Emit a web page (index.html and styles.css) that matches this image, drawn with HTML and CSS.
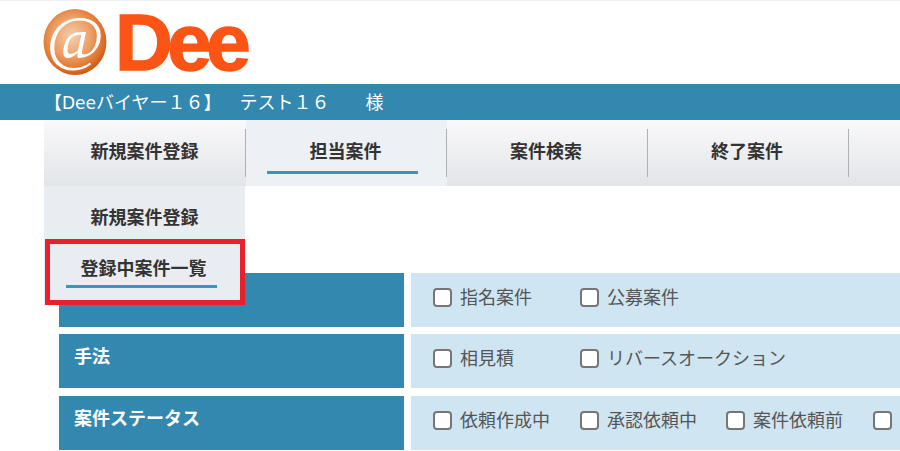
FILE: index.html
```html
<!DOCTYPE html>
<html lang="ja">
<head>
    <meta charset="UTF-8">
    <meta name="viewport" content="width=device-width, initial-scale=1.0">
    <title>担当案件</title>
    <link rel="stylesheet" href="styles.css">
</head>
<body>
    <header class="logo-area">
        <div class="logo">
            <svg class="logo-mark" width="64" height="82" viewBox="0 0 64 82" aria-hidden="true">
                <defs>
                    <radialGradient id="ball" cx="0.45" cy="0.42" r="0.6">
                        <stop offset="0" stop-color="#f6cfae"/>
                        <stop offset="0.55" stop-color="#ec9a5e"/>
                        <stop offset="0.85" stop-color="#dd6f28"/>
                        <stop offset="1" stop-color="#c9530f"/>
                    </radialGradient>
                </defs>
                <ellipse cx="32" cy="40" rx="31.5" ry="33" fill="url(#ball)"/>
                <text class="logo-at" x="32" y="56">@</text>
            </svg>
            <span class="logo-name">Dee</span>
        </div>
    </header>

    <div class="user-bar">【<span class="latin">Dee</span>バイヤー１６】<span class="user-name">テスト１６　　様</span></div>

    <nav class="main-nav">
        <div class="nav-item">
            <a>新規案件登録</a>
            <div class="sub-menu">
                <a class="sub-item">新規案件登録</a>
                <a class="sub-item sub-current"><span>登録中案件一覧</span></a>
            </div>
        </div>
        <div class="nav-item nav-current"><a><span>担当案件</span></a></div>
        <div class="nav-item nav-plain"><a>案件検索</a></div>
        <div class="nav-item nav-plain"><a>終了案件</a></div>
        <div class="nav-rest"></div>
    </nav>

    <section class="search-form">
        <div class="form-row">
            <div class="row-title"></div>
            <div class="row-body">
                <label class="check check-1"><i></i>指名案件</label>
                <label class="check check-2"><i></i>公募案件</label>
            </div>
        </div>
        <div class="form-row">
            <div class="row-title">手法</div>
            <div class="row-body">
                <label class="check check-1"><i></i>相見積</label>
                <label class="check check-2"><i></i>リバースオークション</label>
            </div>
        </div>
        <div class="form-row">
            <div class="row-title">案件ステータス</div>
            <div class="row-body">
                <label class="check check-1"><i></i>依頼作成中</label>
                <label class="check check-2"><i></i>承認依頼中</label>
                <label class="check check-3"><i></i>案件依頼前</label>
                <label class="check"><i></i></label>
            </div>
        </div>
    </section>
</body>
</html>
```

FILE: styles.css
```css
html, body {
    height: 100%;
    overflow: hidden;
}
body {
    margin: 0;
    background: #fff;
    color: #333;
    font-family: "Noto Sans CJK JP", "Noto Sans", sans-serif;
    font-size: 18px;
}
.logo-area {
    height: 84px;
    padding-left: 43px;
    border-top: 1px solid #eef0f2;
    box-sizing: border-box;
}
.logo {
    display: flex;
    align-items: flex-start;
    height: 83px;
}
.logo-mark {
    flex: none;
    margin-top: 1px;
}
.logo-at {
    fill: #fff;
    font-family: "Liberation Serif", serif;
    font-style: italic;
    font-size: 62px;
    text-anchor: middle;
}
.logo-name {
    margin: -1px 0 0 8px;
    color: #fb5414;
    font-family: "Liberation Sans", sans-serif;
    font-weight: bold;
    font-size: 80px;
    line-height: 86px;
    letter-spacing: -5.5px;
    -webkit-text-stroke: 1.5px #fb5414;
}
.user-bar {
    height: 36px;
    padding-left: 44px;
    background: #3288af;
    color: #fff;
    line-height: 34px;
    white-space: nowrap;
}
.latin {
    font-family: "DejaVu Sans", sans-serif;
    font-size: 17px;
}
.user-name {
    margin-left: 18px;
}
.main-nav {
    display: flex;
    height: 66px;
    margin-left: 44px;
    background: linear-gradient(#f9f9fa, #e2e4e8);
    position: relative;
    z-index: 2;
}
.nav-item {
    flex: none;
    width: 201px;
    height: 66px;
    position: relative;
    font-weight: bold;
    text-align: center;
}
.nav-item:first-child {
    width: 202px;
}
.nav-item > a {
    display: block;
    height: 48px;
    margin-top: 9px;
    border-right: 1px solid #aeb0b2;
    line-height: 43px;
}
.nav-plain > a {
    padding-right: 2px;
    box-sizing: border-box;
}
.nav-current {
    background: #edf1f6;
}
.nav-current > a span {
    display: block;
    width: 151px;
    height: 42px;
    margin-left: 21px;
    border-bottom: 3px solid #3f93b7;
    text-indent: 6px;
}
.nav-rest {
    flex: 1;
}
.sub-menu {
    position: absolute;
    top: 66px;
    left: 0;
    width: 201px;
    background: #e9edf1;
}
.sub-item {
    display: block;
    height: 53px;
    line-height: 60px;
}
.sub-current {
    height: 56px;
    margin-left: 1px;
    border: 5px solid #e8202c;
    line-height: 46px;
}
.sub-current span {
    display: block;
    width: 147px;
    height: 41px;
    margin-left: 16px;
    padding-left: 4px;
    border-bottom: 3px solid #3f93b7;
}
.search-form {
    margin: 87px 0 0 59px;
}
.form-row {
    display: flex;
    gap: 7px;
    height: 54px;
    margin-bottom: 7px;
}
.form-row:last-child {
    margin-top: 8px;
}
.row-title {
    flex: none;
    width: 345px;
    padding: 8px 0 0 15px;
    box-sizing: border-box;
    background: #3288af;
    color: #fff;
    font-weight: bold;
}
.row-body {
    flex: 1;
    display: flex;
    padding: 11px 0 0 22px;
    background: #cfe5f2;
    color: #555;
    white-space: nowrap;
}
.check {
    display: flex;
    align-items: flex-start;
    line-height: 24px;
    height: 26px;
    margin-right: 18px;
}
.check-1 {
    width: 129px;
    margin-right: 18px;
}
.check-2 {
    width: 128px;
}
.check-3 {
    width: 129px;
}
.check i {
    flex: none;
    width: 19px;
    height: 19px;
    margin: 4px 8px 0 0;
    border: 2px solid #767676;
    border-radius: 4px;
    box-sizing: border-box;
    background: #fff;
}
```
